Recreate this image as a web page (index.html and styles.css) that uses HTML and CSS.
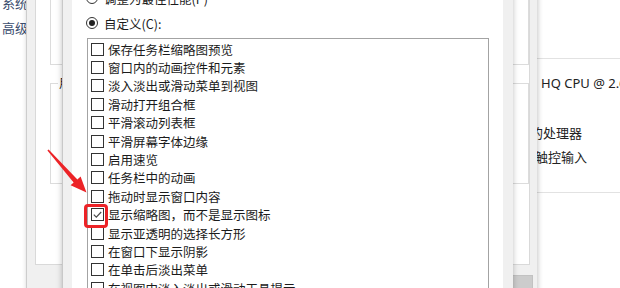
FILE: index.html
```html
<!DOCTYPE html>
<html lang="zh-CN">
<head>
    <meta charset="UTF-8">
    <meta name="viewport" content="width=device-width, initial-scale=1.0">
    <title>性能选项</title>
    <link rel="stylesheet" href="styles.css">
</head>
<body>
    <div class="desk">
        <!-- control panel window in the back -->
        <div class="cp-window">
            <ul class="cp-nav">
                <li>系统保护</li>
                <li>高级系统设置</li>
            </ul>
            <div class="cp-info">
                <div class="cp-line">HQ CPU @ 2.60GHz</div>
                <div class="cp-line cp-gap cp-shift">的处理器</div>
                <div class="cp-line cp-shift2">触控输入</div>
            </div>
        </div>

        <!-- system properties dialog -->
        <div class="dlg sys-dlg">
            <div class="sys-page">
                <div class="group group-top"></div>
                <div class="group group-profile"><span class="group-caption">用户配置文件</span></div>
            </div>
            <div class="sys-buttons">
                <div class="btn"></div>
            </div>
        </div>

        <!-- performance options dialog -->
        <div class="dlg perf-dlg">
            <div class="perf-page">
                <div class="radio-row">
                    <span class="radio"></span>
                    <span>调整为最佳性能(P)</span>
                </div>
                <div class="radio-row radio-second">
                    <span class="radio radio-on"></span>
                    <span>自定义(C):</span>
                </div>
                <div class="check-list">
                    <div class="check-row"><span class="box"></span>保存任务栏缩略图预览</div>
                    <div class="check-row"><span class="box"></span>窗口内的动画控件和元素</div>
                    <div class="check-row"><span class="box"></span>淡入淡出或滑动菜单到视图</div>
                    <div class="check-row"><span class="box"></span>滑动打开组合框</div>
                    <div class="check-row"><span class="box"></span>平滑滚动列表框</div>
                    <div class="check-row"><span class="box"></span>平滑屏幕字体边缘</div>
                    <div class="check-row"><span class="box"></span>启用速览</div>
                    <div class="check-row"><span class="box"></span>任务栏中的动画</div>
                    <div class="check-row"><span class="box"></span>拖动时显示窗口内容</div>
                    <div class="check-row">
                        <span class="box">
                            <svg viewBox="0 0 11 11" width="11" height="11"><polyline points="1.8,5.6 4.3,8.1 9.2,3" fill="none" stroke="#4a4a4a" stroke-width="1.2"/></svg>
                        </span>显示缩略图，而不是显示图标
                    </div>
                    <div class="check-row"><span class="box"></span>显示亚透明的选择长方形</div>
                    <div class="check-row"><span class="box"></span>在窗口下显示阴影</div>
                    <div class="check-row"><span class="box"></span>在单击后淡出菜单</div>
                    <div class="check-row"><span class="box"></span>在视图中淡入淡出或滑动工具提示</div>
                </div>
            </div>
        </div>

        <!-- annotation -->
        <div class="mark-box"></div>
        <svg class="mark-arrow" width="620" height="288" viewBox="0 0 620 288">
            <polygon points="47.4,150.6 48.6,149.4 77.4,179.4 80.6,176.6 86.5,192.5 70.6,185.2 73.6,182.4" fill="#ec2327"/>
        </svg>
    </div>
</body>
</html>
```

FILE: styles.css
```css
body {
    margin: 0;
    font-family: "Noto Sans CJK SC", "Noto Sans", sans-serif;
    background-color: #fff;
}
.desk {
    position: relative;
    width: 620px;
    height: 288px;
    overflow: hidden;
    background-color: #fff;
}

/* back window */
.cp-window {
    position: absolute;
    inset: 0;
}
.cp-nav {
    position: absolute;
    left: 2px;
    top: -10px;
    margin: 0;
    padding: 0;
    list-style: none;
    font-size: 13px;
    line-height: 25px;
    color: #3b4d6e;
    white-space: nowrap;
}
.cp-info {
    position: absolute;
    left: 530px;
    top: 58px;
    width: 100px;
    height: 135px;
    box-sizing: border-box;
    border-top: 1px solid #e2e2e2;
    border-bottom: 1px solid #e2e2e2;
    padding: 12px 0 0 11px;
    font-family: "Noto Sans", "Noto Sans CJK SC", sans-serif;
    font-size: 13px;
    color: #222;
}
.cp-line {
    line-height: 24px;
    white-space: nowrap;
}
.cp-gap {
    margin-top: 26px;
}
.cp-shift {
    margin-left: -11px;
}
.cp-shift2 {
    margin-left: -6px;
}

/* dialogs */
.dlg {
    position: absolute;
    background-color: #f0f0f0;
    box-sizing: border-box;
}
.sys-dlg {
    left: 26px;
    top: -12px;
    width: 511px;
    height: 320px;
    border-left: 1px solid #cdcdcd;
    box-shadow: 1px 0 5px rgba(0,0,0,0.22);
}
.sys-page {
    margin-left: 8px;
    width: 495px;
    height: 277px;
    box-sizing: border-box;
    border: 1px solid #d9d9d9;
    background-color: #fff;
    padding-left: 14px;
}
.group {
    border: 1px solid #dcdcdc;
    box-sizing: border-box;
    position: relative;
}
.group-top {
    height: 77px;
    margin-top: -1px;
}
.group-profile {
    height: 101px;
    margin-top: 18px;
}
.group-caption {
    position: absolute;
    left: 7px;
    top: -8px;
    padding: 0 1px;
    background-color: #fff;
    font-size: 12.5px;
    line-height: 14px;
    color: #222;
}
.sys-buttons {
    display: flex;
    justify-content: flex-end;
    padding: 10px 4px 0 0;
}
.btn {
    width: 75px;
    height: 23px;
    background-color: #cccccc;
    border: 1px solid #c2c2c2;
}

.perf-dlg {
    left: 62px;
    top: -30px;
    width: 451px;
    height: 340px;
    border-left: 1px solid #c8c8c8;
    box-shadow: 0 0 6px rgba(0,0,0,0.25);
    padding: 0 10px 0 9px;
}
.perf-page {
    height: 100%;
    background-color: #fff;
    padding-top: 19px;
    box-sizing: border-box;
    font-size: 12.5px;
    color: #1b1b1b;
}
.radio-row {
    display: flex;
    align-items: center;
    gap: 6px;
    height: 18px;
    padding-left: 14px;
    white-space: nowrap;
}
.radio-second {
    margin-top: 7px;
}
.radio {
    width: 12px;
    height: 12px;
    box-sizing: border-box;
    border: 1px solid #333;
    border-radius: 50%;
    position: relative;
}
.radio-on::after {
    content: "";
    position: absolute;
    left: 2px;
    top: 2px;
    width: 6px;
    height: 6px;
    border-radius: 50%;
    background-color: #222;
}
.check-list {
    margin: 6px 0 0 15px;
    width: 402px;
    height: 300px;
    box-sizing: border-box;
    border: 1px solid #a3a3a3;
    padding: 1px 0 0 3px;
}
.check-row {
    display: flex;
    align-items: center;
    gap: 4px;
    height: 18.4px;
    white-space: nowrap;
}
.box {
    width: 13px;
    height: 13px;
    box-sizing: border-box;
    border: 1px solid #333;
    display: flex;
    align-items: center;
    justify-content: center;
    background-color: #fff;
}
.box svg {
    display: block;
}

/* red annotation */
.mark-box {
    position: absolute;
    left: 84px;
    top: 204px;
    width: 24px;
    height: 24px;
    box-sizing: border-box;
    border: 3px solid #ec2327;
    border-radius: 4px;
}
.mark-arrow {
    position: absolute;
    left: 0;
    top: 0;
    pointer-events: none;
}
```
